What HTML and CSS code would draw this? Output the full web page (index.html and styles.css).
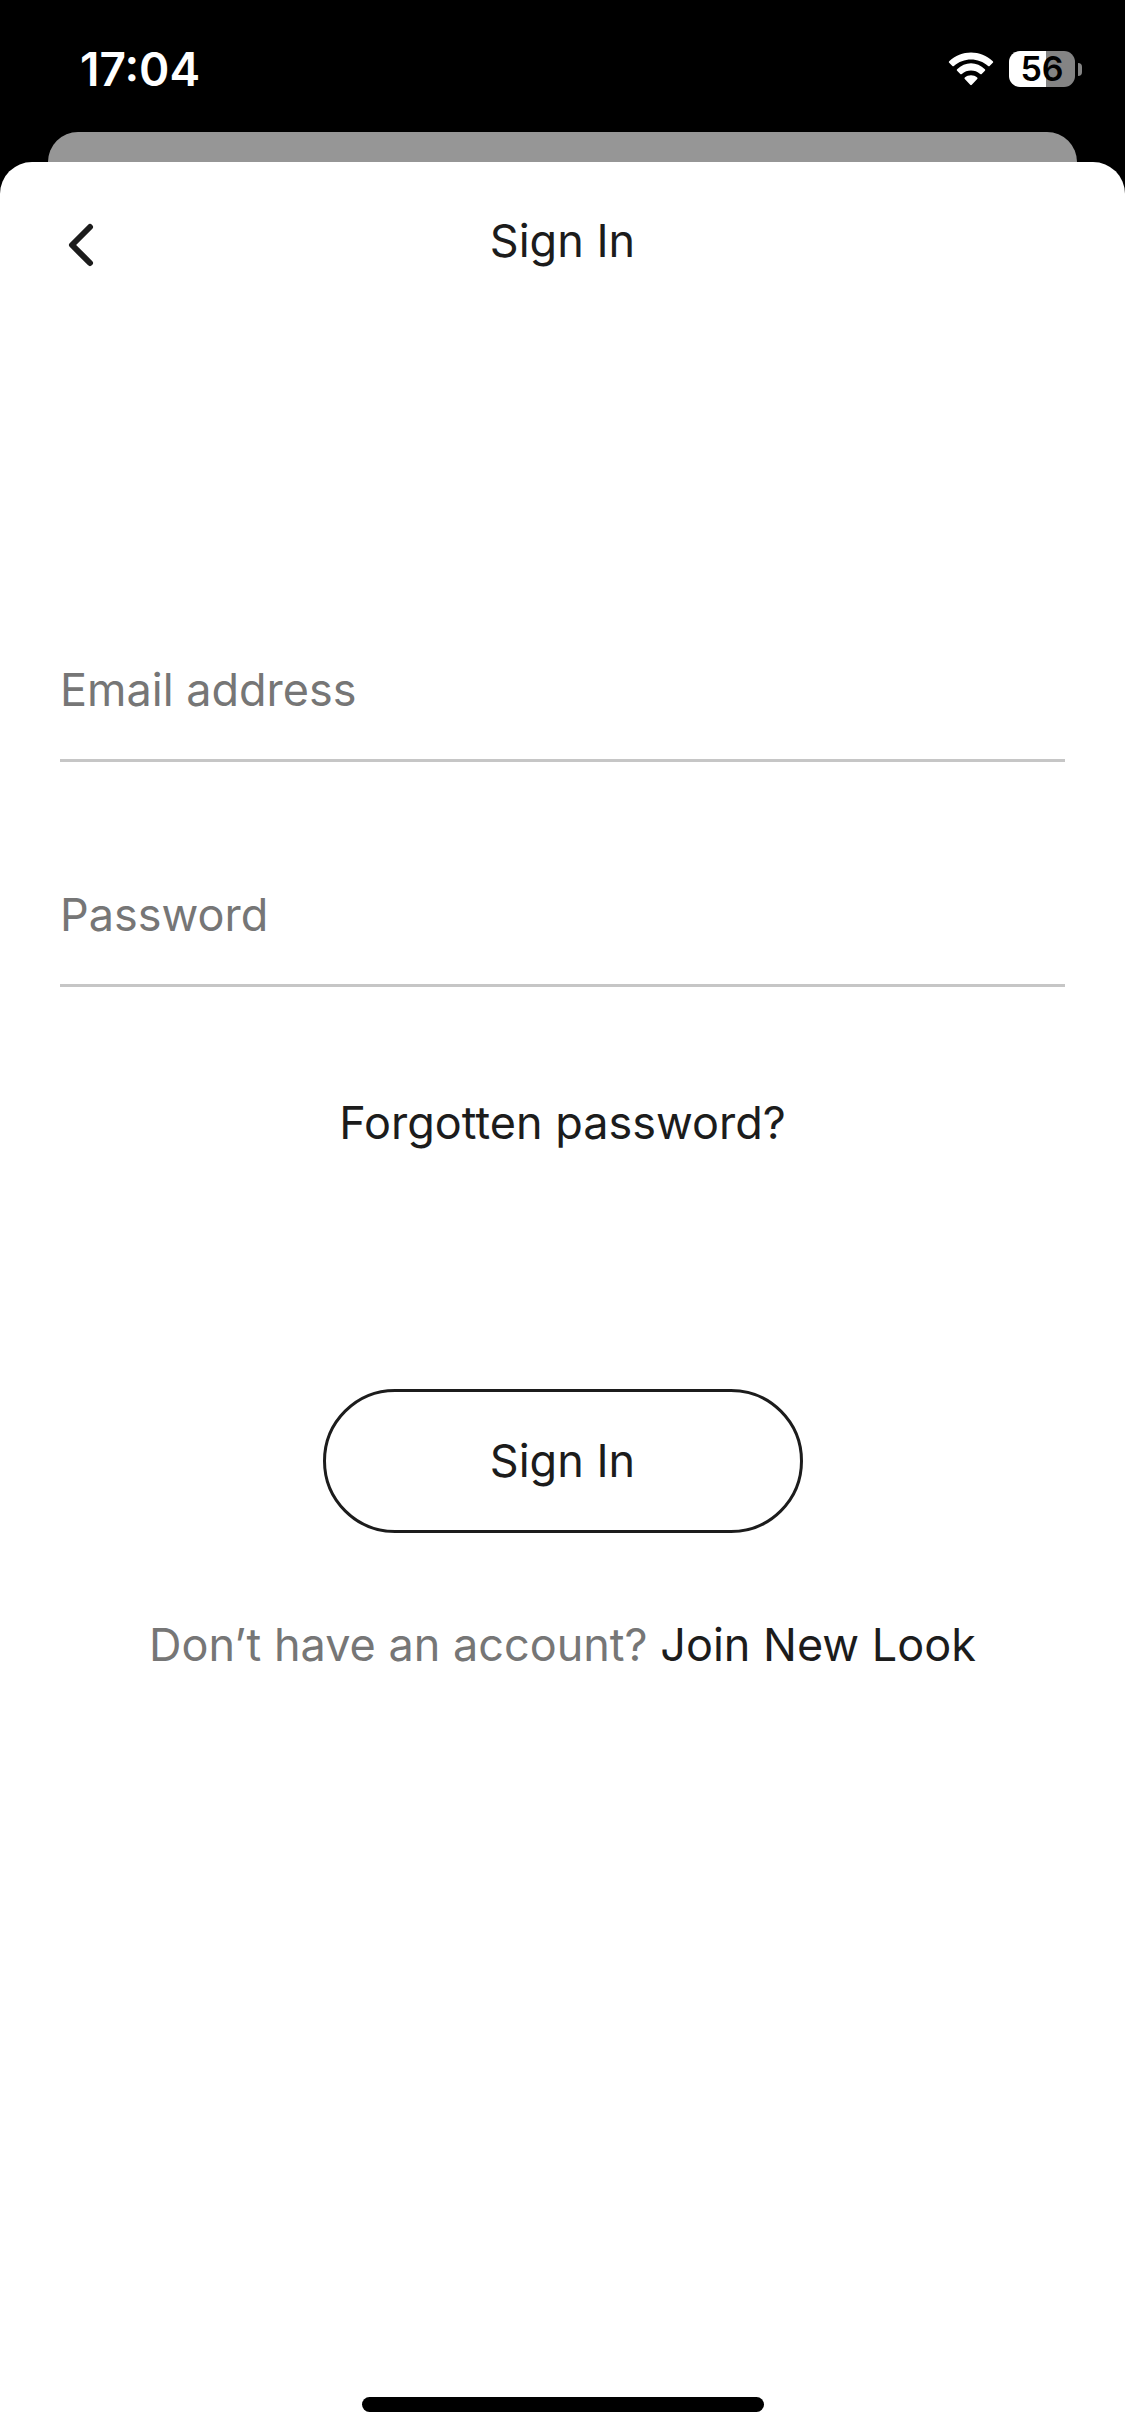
FILE: index.html
```html
<!DOCTYPE html>
<html lang="en">
<head>
  <meta charset="UTF-8">
  <meta name="viewport" content="width=device-width, initial-scale=1.0">
  <title>Sign In</title>
  <link rel="stylesheet" href="styles.css">
</head>
<body>
  <!-- Status bar -->
  <div class="status-bar">
    <span class="time">17:04</span>
    <div class="status-icons">
      <svg class="wifi" viewBox="0 0 46 34" aria-hidden="true">
        <path d="M1.2 9.2C13 -2.4 33 -2.4 44.8 9.2Q45.6 10 44.8 10.8L41.6 14Q40.9 14.6 40.1 13.9C30.6 5.2 15.4 5.2 5.9 13.9Q5.1 14.6 4.4 14L1.2 10.8Q0.4 10 1.2 9.2Z"/>
        <path d="M9.1 17.2C17 9.2 29 9.2 36.9 17.2Q37.7 18 36.9 18.8L33.7 22Q33 22.6 32.2 21.9C27 17.4 19 17.4 13.8 21.9Q13 22.6 12.3 22L9.1 18.8Q8.3 18 9.1 17.2Z"/>
        <path d="M16.8 25.4C20.3 22.4 25.7 22.4 29.2 25.4Q30 26.2 29.2 27L23.8 32.8Q23 33.6 22.2 32.8L16.8 27Q16 26.2 16.8 25.4Z"/>
      </svg>
      <div class="battery">
        <span class="battery-level">56</span>
        <span class="battery-tip"></span>
      </div>
    </div>
  </div>

  <div class="back-card"></div>

  <!-- Sign in sheet -->
  <div class="sheet">
    <header class="sheet-header">
      <button class="back-button" type="button" aria-label="Back">
        <svg viewBox="0 0 26 44" aria-hidden="true">
          <path d="M22 4L4 22L22 40"/>
        </svg>
      </button>
      <h1>Sign In</h1>
    </header>

    <form class="sign-in-form">
      <input type="email" id="email" placeholder="Email address" aria-label="Email address">
      <input type="password" id="password" placeholder="Password" aria-label="Password">
      <a class="forgotten" href="#">Forgotten password?</a>
      <button class="submit-button" type="submit">Sign In</button>
    </form>

    <p class="join">Don’t have an account? <a href="#">Join New Look</a></p>

    <div class="home-indicator"></div>
  </div>
</body>
</html>
```
FILE: styles.css
```css
* {
  box-sizing: border-box;
}

body {
  display: flex;
  flex-direction: column;
  min-height: 100vh;
  margin: 0;
  background-color: #000;
  color: #1c1c1c;
  font-family: Inter, sans-serif;
  font-size: 45px;
  line-height: 60px;
}

a {
  color: #1c1c1c;
  text-decoration: none;
}

button,
input {
  font: inherit;
  color: inherit;
  background: none;
  border: none;
  padding: 0;
}

.status-bar {
  display: flex;
  justify-content: space-between;
  align-items: center;
  height: 132px;
  padding: 6px 43px 0 80px;
  color: white;
}

.time {
  font-size: 46px;
  font-weight: 600;
}

.status-icons {
  display: flex;
  align-items: center;
  gap: 15px;
}

.wifi {
  width: 46px;
  height: 34px;
  fill: white;
}

.battery {
  display: flex;
  align-items: center;
  gap: 3px;
}

.battery-level {
  width: 66px;
  border-radius: 11px;
  background: linear-gradient(to right, white 56%, #848484 56%);
  color: black;
  font-size: 34px;
  font-weight: 600;
  line-height: 36px;
  text-align: center;
}

.battery-tip {
  width: 4px;
  height: 13px;
  border-radius: 0 4px 4px 0;
  background-color: #848484;
}

.back-card {
  height: 30px;
  margin: 0 48px;
  border-radius: 30px 30px 0 0;
  background-color: #969696;
}

.sheet {
  display: flex;
  flex-direction: column;
  flex: 1;
  padding: 0 60px 24px;
  border-radius: 32px 32px 0 0;
  background-color: white;
}

.sheet-header {
  display: grid;
  grid-template-columns: 44px 1fr 44px;
  align-items: center;
  height: 158px;
}

.sheet-header h1 {
  margin: 0;
  font-size: 45px;
  font-weight: 400;
  text-align: center;
}

.back-button {
  display: flex;
  padding: 8px 0 0 8px;
}

.back-button svg {
  width: 26px;
  height: 44px;
  fill: none;
  stroke: #1c1c1c;
  stroke-width: 6;
  stroke-linecap: round;
  stroke-linejoin: round;
}

.sign-in-form {
  display: flex;
  flex-direction: column;
  align-items: center;
  margin-top: 299px;
}

.sign-in-form input {
  width: 100%;
  height: 143px;
  margin-bottom: 82px;
  border-bottom: 3px solid #c6c6c6;
  border-radius: 0;
  outline: none;
}

.sign-in-form input::placeholder {
  color: #767676;
  opacity: 1;
}

.forgotten {
  margin-top: 24px;
}

.submit-button {
  width: 480px;
  max-width: 100%;
  height: 144px;
  margin-top: 236px;
  border: 3px solid #1c1c1c;
  border-radius: 72px;
  cursor: pointer;
}

.join {
  margin: 82px 0 0;
  color: #767676;
  text-align: center;
}

.home-indicator {
  width: 40%;
  height: 15px;
  margin: auto auto 0;
  border-radius: 8px;
  background-color: black;
}
```
